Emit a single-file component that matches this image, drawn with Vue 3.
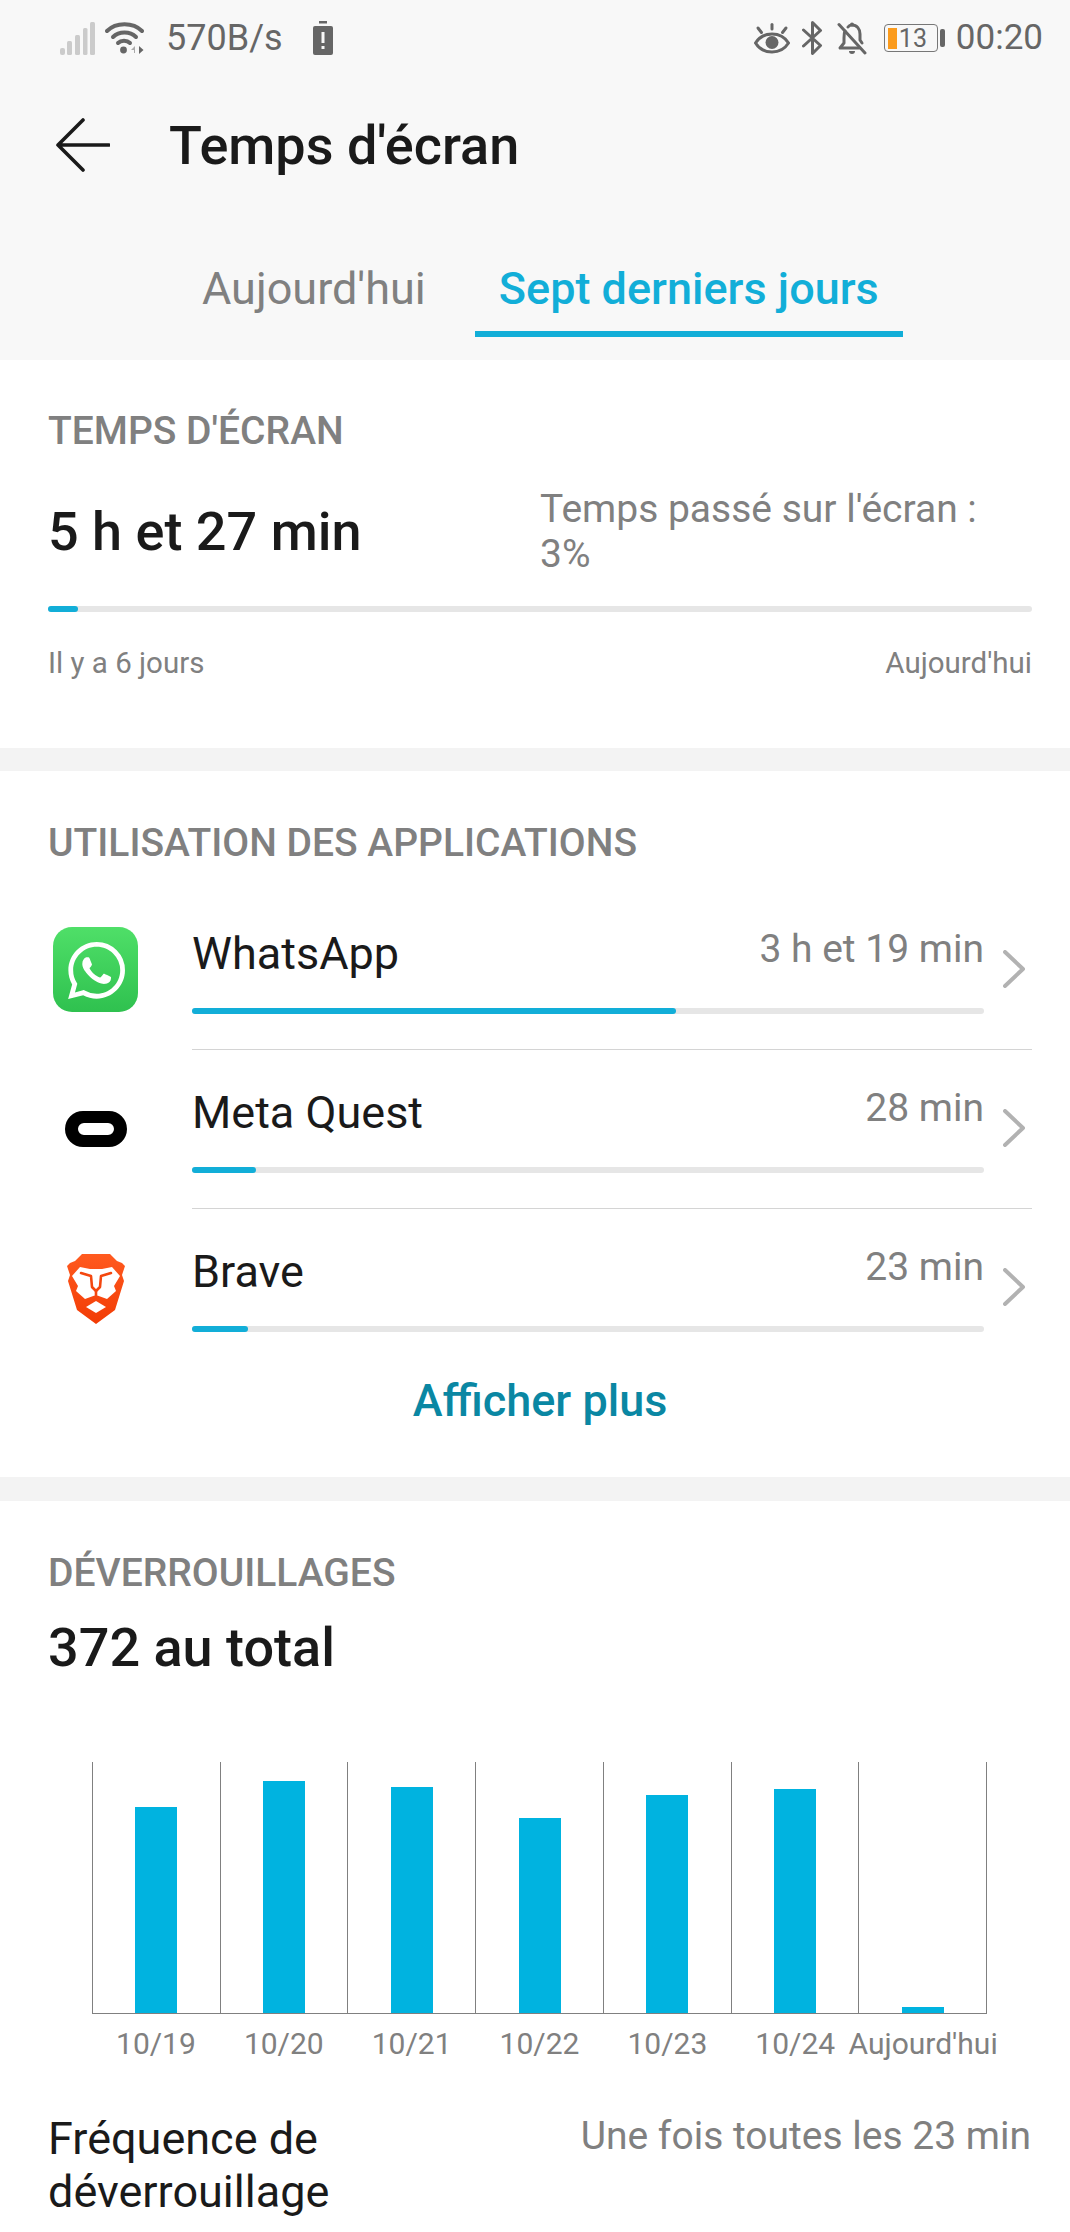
<script setup>
const apps = [
  { name: 'WhatsApp', value: '3 h et 19 min', width: 484, icon: 'wa' },
  { name: 'Meta Quest', value: '28 min', width: 64, icon: 'meta' },
  { name: 'Brave', value: '23 min', width: 56, icon: 'brave' },
]
const bars = [
  { label: '10/19', height: 206 },
  { label: '10/20', height: 232 },
  { label: '10/21', height: 226 },
  { label: '10/22', height: 195 },
  { label: '10/23', height: 218 },
  { label: '10/24', height: 224 },
  { label: "Aujourd'hui", height: 6 },
]
</script>

<template>
  <div class="page">
    <header class="head">
      <div class="status">
        <svg class="s-signal" width="35" height="33" viewBox="0 0 35 33">
          <g fill="#cbcbcb">
            <rect x="0" y="26" width="5" height="7" rx="2" />
            <rect x="7" y="19" width="5" height="14" rx="1.5" />
            <rect x="15" y="13" width="5" height="20" rx="1.5" />
            <rect x="23" y="6" width="4.5" height="27" rx="1.5" />
            <rect x="30" y="0" width="5" height="33" rx="1.5" />
          </g>
        </svg>
        <svg class="s-wifi" width="39" height="34" viewBox="0 0 39 34">
          <g fill="none" stroke="#666" stroke-width="4" stroke-linecap="round">
            <path d="M2 10 C11 1 28 1 37 10" />
            <path d="M8 16 C14 10 25 10 31 16" />
            <path d="M13 22 C16 19 22 19 25 22" />
          </g>
          <circle cx="18.5" cy="29" r="3.4" fill="#666" />
          <path d="M26 29 L30 25 V32 H29 V29 Z" fill="#aaa" />
          <path d="M34 25 L38.5 29 L34 33 Z" fill="#666" />
        </svg>
        <span class="s-text s-speed">570B/s</span>
        <svg class="s-saver" width="20" height="34" viewBox="0 0 20 34">
          <rect x="6" y="0" width="8" height="2.5" fill="#666" />
          <path d="M2 5 H18 A2 2 0 0 1 20 7 V32 A2 2 0 0 1 18 34 H2 A2 2 0 0 1 0 32 V7 A2 2 0 0 1 2 5 Z" fill="#666" />
          <rect x="8.5" y="11" width="3" height="11" fill="#f8f8f8" />
          <rect x="8.5" y="25" width="3" height="3" fill="#f8f8f8" />
        </svg>
        <div class="s-right">
          <svg width="36" height="31" viewBox="0 0 36 31">
            <g fill="none" stroke="#666" stroke-width="3" stroke-linecap="round">
              <path d="M1.5 20 C9 8 27 8 34.5 20 C27 32 9 32 1.5 20 Z" />
              <path d="M18 1.5 V6" />
              <path d="M4 5 L7.5 9.5" />
              <path d="M32 5 L28.5 9.5" />
            </g>
            <circle cx="18" cy="19.5" r="6.5" fill="#666" />
          </svg>
          <svg class="s-bt" width="21" height="34" viewBox="0 0 21 34">
            <path d="M1.5 9 L18.5 24.5 L10.5 32.5 V1.5 L18.5 9.5 L1.5 25" fill="none" stroke="#666" stroke-width="3" stroke-linejoin="round" stroke-linecap="round" />
          </svg>
          <svg class="s-bell" width="30" height="33" viewBox="0 0 30 33">
            <g fill="none" stroke="#666" stroke-width="3" stroke-linecap="round" stroke-linejoin="round">
              <path d="M8 9 C7 11 7 13 7 16 V21 L3 26 H22" />
              <path d="M11 5 C12 3.5 13.5 3 15 3 C20 3 23 7 23 12 V18 L25 21" />
              <path d="M2 2.5 L28 31" />
            </g>
            <path d="M12 29 H18 A3 3 0 0 1 12 29 Z" fill="#666" />
            <circle cx="15" cy="2.5" r="2" fill="#666" />
          </svg>
          <div class="batt">
            <span class="batt-fill"></span>
            <span class="batt-num">13</span>
          </div>
          <span class="batt-nub"></span>
          <span class="s-text s-time">00:20</span>
        </div>
      </div>
      <div class="title-row">
        <svg class="back" width="54" height="54" viewBox="0 0 54 54">
          <path d="M27 2 L2 27 L27 52 M2 27 H53" fill="none" stroke="#1a1a1a" stroke-width="3.6" stroke-linecap="round" stroke-linejoin="round" />
        </svg>
        <h1 class="title">Temps d'écran</h1>
      </div>
      <div class="tabs">
        <div class="tab">Aujourd'hui</div>
        <div class="tab active">Sept derniers jours</div>
      </div>
    </header>

    <section class="card card-one">
      <h2 class="sec-title">TEMPS D'ÉCRAN</h2>
      <div class="metric">
        <div class="big">5 h et 27 min</div>
        <div class="share">Temps passé sur l'écran :<br />3%</div>
      </div>
      <div class="track thin"><div class="fill first"></div></div>
      <div class="range">
        <span>Il y a 6 jours</span>
        <span>Aujourd'hui</span>
      </div>
    </section>

    <section class="card card-two">
      <h2 class="sec-title">UTILISATION DES APPLICATIONS</h2>
      <div class="list">
        <div v-for="(app, i) in apps" :key="app.name" class="row">
          <div class="app-icon">
            <svg v-if="app.icon === 'wa'" width="85" height="85" viewBox="0 0 85 85">
              <defs>
                <linearGradient id="wag" x1="0" y1="0" x2="0" y2="1">
                  <stop offset="0" stop-color="#4fdf68" />
                  <stop offset="1" stop-color="#2fc14f" />
                </linearGradient>
              </defs>
              <rect width="85" height="85" rx="19" fill="url(#wag)" />
              <g transform="translate(15 15) scale(2.38)">
                <path fill="#fff" d="M17.472 14.382c-.297-.149-1.758-.867-2.03-.967-.273-.099-.471-.148-.67.15-.197.297-.767.966-.94 1.164-.173.199-.347.223-.644.075-.297-.15-1.255-.463-2.39-1.475-.883-.788-1.48-1.761-1.653-2.059-.173-.297-.018-.458.13-.606.134-.133.298-.347.446-.52.149-.174.198-.298.298-.497.099-.198.05-.371-.025-.52-.075-.149-.669-1.612-.916-2.207-.242-.579-.487-.5-.669-.51-.173-.008-.371-.01-.57-.01-.198 0-.52.074-.792.372-.272.297-1.04 1.016-1.04 2.479 0 1.462 1.065 2.875 1.213 3.074.149.198 2.096 3.2 5.077 4.487.709.306 1.262.489 1.694.625.712.227 1.36.195 1.871.118.571-.085 1.758-.719 2.006-1.413.248-.694.248-1.289.173-1.413-.074-.124-.272-.198-.57-.347m-5.421 7.403h-.004a9.87 9.87 0 01-5.031-1.378l-.361-.214-3.741.982.998-3.648-.235-.374a9.86 9.86 0 01-1.51-5.26c.001-5.45 4.436-9.884 9.888-9.884 2.64 0 5.122 1.03 6.988 2.898a9.825 9.825 0 012.893 6.994c-.003 5.45-4.437 9.884-9.885 9.884m8.413-18.297A11.815 11.815 0 0012.05 0C5.495 0 .16 5.335.157 11.892c0 2.096.547 4.142 1.588 5.945L.057 24l6.305-1.654a11.882 11.882 0 005.683 1.448h.005c6.554 0 11.89-5.335 11.893-11.893a11.821 11.821 0 00-3.48-8.413z" />
              </g>
            </svg>
            <svg v-else-if="app.icon === 'meta'" width="62" height="36" viewBox="0 0 62 36">
              <path fill-rule="evenodd" fill="#000" d="M18 0 H44 A18 18 0 0 1 44 36 H18 A18 18 0 0 1 18 0 Z M19 12 A6 6 0 0 0 19 24 H43 A6 6 0 0 0 43 12 Z" />
            </svg>
            <svg v-else class="brave" width="58" height="70" viewBox="0 0 58 70">
              <defs>
                <linearGradient id="brg" x1="0" y1="0" x2="0" y2="1">
                  <stop offset="0" stop-color="#ff5a1f" />
                  <stop offset="1" stop-color="#f23c05" />
                </linearGradient>
              </defs>
              <path fill="url(#brg)" d="M15 0 H43 L50 7 L55 9 L58 12 L55 21 L57 27 L48 56 L29 70 L10 56 L1 27 L3 21 L0 12 L3 9 L8 7 Z" />
              <path fill="#fff" d="M13 13 L23 15 H35 L45 13 L53 22 L47 32 L49 37 L40 45 L29 41 L18 45 L9 37 L11 32 L5 22 Z" />
              <path fill="#fff" d="M29 47 L39 53 L29 59 L19 53 Z" />
              <g fill="none" stroke="#f4470f" stroke-width="2.6" stroke-linejoin="round" stroke-linecap="round">
                <path d="M14 19 L24 22 L25 33 L29 37 L33 33 L34 22 L44 19" />
                <path d="M29 37 V41" />
              </g>
            </svg>
          </div>
          <div class="row-main" :class="{ divided: i < apps.length - 1 }">
            <div class="row-body">
              <div class="row-top">
                <span class="app-name">{{ app.name }}</span>
                <span class="app-value">{{ app.value }}</span>
              </div>
              <div class="track"><div class="fill" :style="{ width: app.width + 'px' }"></div></div>
            </div>
            <svg class="chev" width="22" height="38" viewBox="0 0 22 38">
              <path d="M2 2 L20 19 L2 36" fill="none" stroke="#b2b2b2" stroke-width="4" stroke-linecap="round" stroke-linejoin="round" />
            </svg>
          </div>
        </div>
      </div>
      <div class="more">Afficher plus</div>
    </section>

    <section class="card card-three">
      <h2 class="sec-title">DÉVERROUILLAGES</h2>
      <div class="big total">372 au total</div>
      <div class="chart">
        <div class="plot">
          <div v-for="b in bars" :key="b.label" class="col">
            <div class="bar" :style="{ height: b.height + 'px' }"></div>
          </div>
        </div>
        <div class="labels">
          <div v-for="b in bars" :key="b.label" class="lab">{{ b.label }}</div>
        </div>
      </div>
      <div class="freq">
        <div class="freq-name">Fréquence de<br />déverrouillage</div>
        <div class="freq-value">Une fois toutes les 23 min</div>
      </div>
    </section>
  </div>
</template>

<style>
html, body { margin: 0; background: #fff; }
</style>

<style scoped>
.page {
  width: 1070px;
  height: 2232px;
  overflow: hidden;
  background: #f3f3f3;
  font-family: Roboto, "Liberation Sans", sans-serif;
  color: #1a1a1a;
}
.head { background: #f8f8f8; height: 360px; }
.status {
  height: 76px;
  display: flex;
  align-items: center;
  padding: 0 27px 0 60px;
  box-sizing: border-box;
}
.s-wifi { margin-left: 10px; }
.s-text { font-size: 36px; color: #666; line-height: 76px; }
.s-speed { margin-left: 22px; }
.s-saver { margin-left: 30px; }
.s-right { margin-left: auto; display: flex; align-items: center; }
.s-bt { margin-left: 12px; }
.s-bell { margin-left: 14px; }
.batt {
  margin-left: 17px;
  width: 54px;
  height: 28px;
  box-sizing: border-box;
  border: 1.5px solid #777;
  border-radius: 4px;
  display: flex;
  align-items: center;
  padding-left: 3px;
}
.batt-fill { width: 9px; height: 21px; background: #fb9b1c; }
.batt-num { font-size: 25px; color: #666; line-height: 25px; margin-left: 2px; }
.batt-nub { width: 5px; height: 18px; background: #666; border-radius: 2px; margin-left: 2px; }
.s-time { margin-left: 11px; font-size: 35px; }

.title-row {
  height: 138px;
  display: flex;
  align-items: center;
  padding-left: 56px;
}
.back { flex: none; }
.title {
  margin: 2px 0 0 59px;
  font-size: 54px;
  font-weight: 500;
  line-height: 60px;
  color: #1a1a1a;
}
.tabs { display: flex; padding-left: 178px; gap: 25px; }
.tab {
  padding: 50px 24px 17px;
  font-size: 45px;
  line-height: 50px;
  color: #808080;
  border-bottom: 6px solid transparent;
}
.tab.active {
  color: #12aed8;
  font-weight: 500;
  border-bottom-color: #12aed8;
}

.card { background: #fff; padding: 0 38px 0 48px; }
.card-one { height: 388px; box-sizing: border-box; padding-top: 51px; }
.card-two { margin-top: 23px; height: 706px; box-sizing: border-box; padding-top: 52px; padding-right: 0; }
.card-three { margin-top: 24px; height: 731px; box-sizing: border-box; padding-top: 52px; }
.sec-title {
  margin: 0;
  font-size: 39px;
  font-weight: 500;
  line-height: 40px;
  color: #808080;
}
.metric { display: flex; align-items: center; margin-top: 36px; }
.big { font-size: 54px; font-weight: 500; line-height: 60px; color: #1a1a1a; }
.metric .big { width: 492px; }
.share { font-size: 39px; line-height: 45px; color: #808080; }
.track {
  height: 6px;
  background: #e6e6e6;
  border-radius: 3px;
}
.thin { margin-top: 29px; height: 6px; width: 984px; }
.fill { height: 100%; background: #12aed8; border-radius: 3px; }
.fill.first { width: 30px; }
.range {
  width: 984px;
  margin-top: 31px;
  display: flex;
  justify-content: space-between;
  font-size: 29.5px;
  line-height: 40px;
  color: #808080;
}

.list { margin-top: 27px; }
.row { display: flex; }
.app-icon {
  width: 95px;
  margin-right: 49px;
  height: 159px;
  flex: none;
  display: flex;
  align-items: center;
  justify-content: center;
}
.brave { margin-top: 3px; }
.row-main {
  width: 840px;
  height: 160px;
  box-sizing: border-box;
  padding-top: 38px;
  display: flex;
  margin-bottom: -1px;
}
.row-main.divided { border-bottom: 1px solid #d4d4d4; }
.row-body { width: 792px; }
.row-top { display: flex; justify-content: space-between; align-items: flex-start; }
.app-name { font-size: 45px; line-height: 50px; color: #1a1a1a; padding-top: 1px; }
.app-value { font-size: 39px; line-height: 42px; color: #808080; }
.row-body .track { margin-top: 29px; }
.chev { margin: 22px 0 0 19px; flex: none; }
.more {
  height: 66px;
  line-height: 66px;
  margin-top: 1px;
  text-align: center;
  width: 984px;
  font-size: 45px;
  font-weight: 500;
  color: #0a87a3;
}

.total { margin-top: 25px; }
.chart { margin: 84px 0 0 44px; width: 895px; }
.plot {
  height: 251px;
  display: flex;
  border-bottom: 1px solid #808080;
  border-right: 1px solid #808080;
}
.col {
  flex: 1;
  border-left: 1px solid #808080;
  display: flex;
  align-items: flex-end;
  justify-content: center;
}
.bar { width: 42px; background: #00b3e0; }
.labels { display: flex; margin-top: 10px; }
.lab {
  flex: 1;
  width: 0;
  white-space: nowrap;
  display: flex;
  justify-content: center;
  font-size: 30px;
  line-height: 40px;
  color: #808080;
}
.freq { display: flex; justify-content: space-between; margin-top: 48px; width: 983px; }
.freq-name { font-size: 45px; line-height: 53px; color: #1a1a1a; }
.freq-value { font-size: 39px; line-height: 48px; color: #808080; }
</style>
